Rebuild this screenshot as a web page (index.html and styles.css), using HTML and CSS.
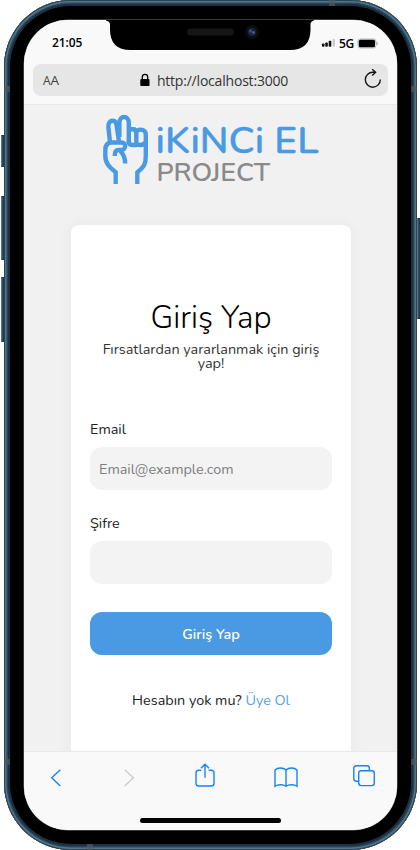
FILE: index.html
```html
<!DOCTYPE html>
<html lang="tr">
<head>
<meta charset="utf-8">
<title>Giriş Yap</title>
<link rel="stylesheet" href="styles.css">
</head>
<body>
<div class="phone">
  <i class="key mute"></i><i class="key up"></i><i class="key down"></i><i class="key power"></i>
  <i class="seam s1"></i><i class="seam s2"></i><i class="seam s3"></i><i class="seam s4"></i><i class="seam s5"></i><i class="seam s6"></i>
  <div class="screen">
    <header class="browser">
      <div class="status">
        <span class="clock">21:05</span>
        <span class="network">
          <svg width="15" height="10" viewBox="0 0 15 10"><g fill="#111"><rect x="1" y="5.5" width="2.5" height="3.3" rx=".7"/><rect x="4.3" y="4.5" width="2.5" height="4.3" rx=".7"/><rect x="7.7" y="2.8" width="2.6" height="6" rx=".7"/></g><rect x="11.5" y="1" width="2.5" height="7.8" rx=".7" fill="#ccc"/></svg>
          <b>5G</b>
          <svg width="21" height="11" viewBox="0 0 21 11"><rect x=".9" y="1" width="18" height="9" rx="2.3" fill="none" stroke="#aaa" stroke-width=".8"/><rect x="1.8" y="1.8" width="16.2" height="7.4" rx="1.5"/><path d="M20 4v3" stroke="#999"/></svg>
        </span>
      </div>
      <div class="address">
        <span class="reader"><small>A</small>A</span>
        <span class="url"><svg width="10" height="14" viewBox="0 0 10 14"><path d="M2.3 7V4a2.7 2.7 0 0 1 5.4 0v3" fill="none" stroke="#000" stroke-width="1.3"/><rect x=".3" y="5.9" width="9.2" height="7.2" rx="1.2"/></svg><span>http://localhost:3000</span></span>
        <svg class="reload" width="18" height="21" viewBox="0 0 18 21" fill="none" stroke="#151515" stroke-width="1.4"><path d="M16.3 11.5a7.5 7.5 0 1 1-7.5-7.3h2.3M8.2 1.2l3.400 3-3.400 3.300"/></svg>
      </div>
    </header>
    <main class="page">
      <svg class="logo" width="240" height="90" viewBox="0 0 240 90">
        <g fill="none" stroke="#4a9ae3" stroke-width="4.4" stroke-linejoin="round">
          <path d="M25.7 84V72.2C20 67.8 15.3 63.5 15.3 56V50Q15.3 42.5 22 42.5H31.5C36.5 42.5 36.2 50 31.500 50H28.500Q24.700 50 24.700 56M30.400 51.300Q35.200 56 35.200 63.500"/>
          <path d="M20 42L18.400 27.500C17.600 19.300 26 18.500 26.500 25L28.900 41"/>
          <path d="M29.400 37V23C29.400 15 38.800 15 38.800 23V43"/>
          <path d="M38.800 29.300H43Q46.300 29.300 46.300 33V45H42Q38.800 45 38.800 41M46.300 32.500Q47 29.600 50.500 29.600Q55.800 29.600 55.800 35V56C55.800 64 54 67.500 47.300 72.200V84M46.300 43Q47.300 45 50 45Q54.500 45 55.400 42"/>
        </g>
        <text x="65.500" y="53" class="brand" textLength="163" lengthAdjust="spacingAndGlyphs">iKiNCi EL</text>
        <text x="66.500" y="81" class="sub" textLength="113.500" lengthAdjust="spacingAndGlyphs">PROJECT</text>
      </svg>
      <form class="card">
        <h1>Giriş Yap</h1>
        <p class="lead">Fırsatlardan yararlanmak için giriş<br>yap!</p>
        <label for="email">Email</label>
        <input id="email" type="email" placeholder="Email@example.com">
        <label for="pass" class="second">Şifre</label>
        <input id="pass" type="password">
        <button type="button">Giriş Yap</button>
        <p class="signup"><span>Hesabın yok mu?</span> <a>Üye Ol</a></p>
      </form>
    </main>
    <nav class="toolbar">
      <div class="tools">
        <svg width="26" height="28" viewBox="0 0 26 28"><path d="M17.3 6.700L8.700 14.800l8.600 8.100"/></svg>
        <svg class="off" width="26" height="28" viewBox="0 0 26 28"><path d="M8.700 6.700l8.700 8.100-8.700 8.100"/></svg>
        <svg class="share" width="26" height="28" viewBox="0 0 26 28"><path d="M9.300 7.200H6.800Q4 7.200 4 10v10.200Q4 23 6.800 23h12.400q2.800 0 2.800-2.800V10q0-2.800-2.800-2.800h-2.500M13 14.800V1.500M8.900 5.300L13 1.300l4.100 4"/></svg>
        <svg class="book" width="26" height="28" viewBox="0 0 26 28"><path d="M13 7C10.500 4.300 4.500 4.300 2 7V23.200C4.500 21.200 10.500 21.200 13 23.200c2.500-2 8.500-2 11 0V7C21.500 4.300 15.500 4.300 13 7V23"/></svg>
        <svg class="tabs" width="26" height="28" viewBox="0 0 26 28"><rect x="7.700" y="7.700" width="15.600" height="14.900" rx="2.500"/><path d="M7.700 18.300H5.500Q2.800 18.300 2.800 15.600V5.500Q2.800 2.800 5.500 2.800h10.200q2.700 0 2.700 2.700v2.200"/></svg>
      </div>
      <div class="home"></div>
    </nav>
  </div>
  <svg class="notch" width="208" height="31" viewBox="0 0 208 31"><path d="M0 0H208V.5Q205 .8 204.500 3.500V9.500Q204.500 30 184 30H24.500Q4 30 4 9.500V3.500Q3 .8 0 .5Z"/><rect x="81" y="8.500" width="47" height="7" rx="3.500" fill="#151515"/><circle cx="146" cy="12" r="7" fill="#0d0d10"/><circle cx="146" cy="12" r="4" fill="#182344"/><circle cx="144.500" cy="11" r="1.500" fill="#51458a"/><circle cx="147.500" cy="12.500" r="1.400" fill="#2f61a0"/></svg>
</div>
</body>
</html>
```
FILE: styles.css
```css
* { box-sizing: border-box; }
body { margin: 0; background: #fff; overflow: hidden; font-family: Nunito, Lato, "Open Sans", sans-serif; }
.phone { position: relative; width: 413px; height: 850px; margin-left: 4px; padding: 20px; background: #000; border-radius: 67px; box-shadow: inset 0 0 0 1px #2b4558, inset 0 0 0 2.5px #557488, inset 0 0 0 4px #29465b, inset 0 0 0 6px #1b3040; }
.screen { width: 373px; height: 810px; border-radius: 44px; overflow: hidden; background: #f1f1f1; display: flex; flex-direction: column; box-shadow: 0 0 0 .5px #777; }
.browser { height: 85px; flex: none; background: #f9f9f9; border-bottom: 1px solid #e9e9e9; font-family: "Segoe UI", "Open Sans", sans-serif; }
.status { height: 44px; display: flex; justify-content: space-between; padding: 13px 19px 0 28px; }
.clock { font-size: 12px; line-height: 20px; font-weight: 600; letter-spacing: -.1px; }
.network { display: flex; align-items: center; height: 22px; margin-top: -1px; }
.network b { font-size: 12px; font-weight: 600; margin: 0 3px; letter-spacing: -.3px; }
.address { height: 32px; margin: 0 9px; background: #e6e6e6; border-radius: 8px; display: grid; grid-template-columns: 70px 1fr 70px; align-items: center; }
.reader { padding-left: 10px; font-size: 13.5px; color: #444; letter-spacing: -.2px; }
.reader small { font-size: 12px; }
.url { display: flex; align-items: center; justify-content: center; gap: 7px; padding-left: 7px; font-size: 14px; color: #333; white-space: nowrap; letter-spacing: -.2px; }
.reload { justify-self: end; margin: -4px 6px 0 0; }
.page { flex: 1; min-height: 0; overflow: hidden; padding: 0 46px 0 47px; }
.logo { display: block; margin: -5px 0 0 19px; overflow: visible; }
.brand { font-size: 36px; font-weight: 600; fill: #4a9ae3; stroke: #4a9ae3; stroke-width: .3px; }
.sub { font-size: 25px; font-weight: 600; fill: #8a8a8a; }
.card { margin-top: 35px; width: 280px; height: 570px; padding: 75px 19px 0; background: #fff; border-radius: 8px; box-shadow: 0 0 14px rgba(30,60,50,.05); display: flex; flex-direction: column; font-size: 14.4px; color: #222; }
h1 { margin: 0; height: 36px; line-height: 36px; font-size: 31.5px; font-weight: 300; text-align: center; color: #000; }
.lead { margin: 6px 0 0; text-align: center; line-height: 14px; white-space: nowrap; color: #333; }
label { margin-top: 50px; height: 18px; line-height: 18px; }
label.second { margin-top: 24px; }
input { display: block; width: 242px; height: 43px; margin: 9px 0 0; padding: 0 9px; border: 0; border-radius: 12px; background: #f3f3f3; font: inherit; }
input::placeholder { color: #7d7d7d; opacity: 1; }
button { width: 242px; height: 43px; margin-top: 28px; border: 0; border-radius: 12px; background: #4a9ae3; color: #fff; font: inherit; font-weight: 600; }
.signup { margin: 36px 0 0; text-align: center; line-height: 18px; }
.signup a { color: #5b9fe3; }
.toolbar { height: 79px; flex: none; background: #f9f9f9; border-top: 1px solid #e9e9e9; }
.tools { display: flex; gap: 47px; padding: 11px 0 0 19px; }
.tools svg { flex: none; fill: none; stroke: #1683fb; stroke-width: 1.4; }
.tools svg.off { stroke: #ccc; }
.tools .share { margin-left: 3px; }
.tools .book { margin-left: 8px; }
.tools .tabs { margin-left: 5px; }
.home { width: 141px; height: 5px; margin: 27px auto 0; border-radius: 3px; background: #000; }
.notch { position: absolute; left: 102px; top: 20px; }
.key { position: absolute; width: 3px; left: -3px; background: #344f61; border: 1px solid #213847; border-left-color: #587486; border-radius: 1px 0 0 1px; }
.mute { top: 135px; height: 32px; }
.up { top: 196px; height: 64px; }
.down { top: 277px; height: 65px; }
.power { left: 413px; top: 218px; height: 101px; }
.seam { position: absolute; width: 6px; height: 6px; background: #4d5b63; opacity: .7; }
.s1 { left: 0; top: 86px; }
.s2 { right: 0; top: 86px; }
.s3 { left: 0; top: 759px; }
.s4 { right: 0; top: 759px; }
.s5 { left: 325px; top: 0; }
.s6 { left: 83px; bottom: 0; }
```
